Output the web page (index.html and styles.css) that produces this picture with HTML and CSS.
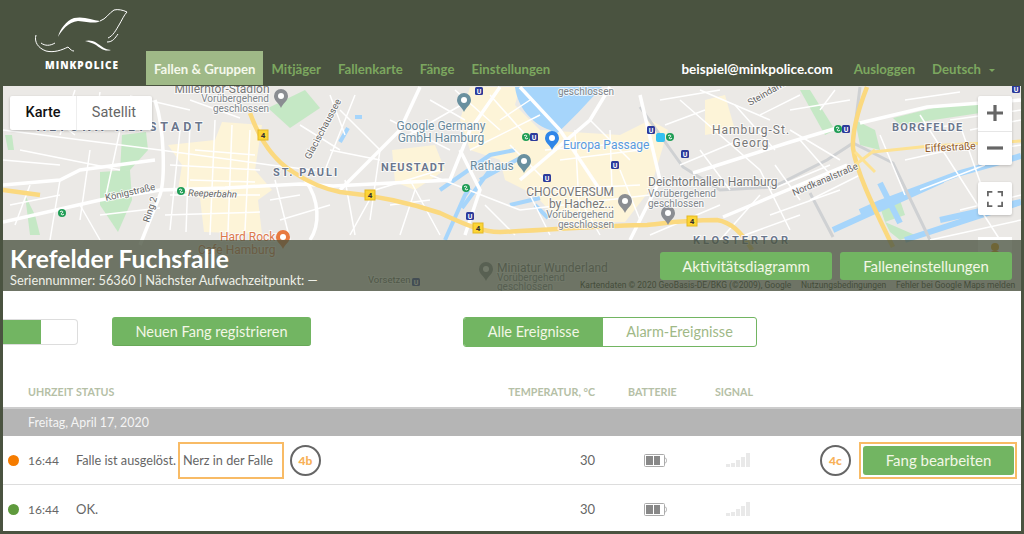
FILE: index.html
```html
<!DOCTYPE html>
<html lang="de">
<head>
<meta charset="utf-8">
<title>MinkPolice</title>
<link rel="stylesheet" href="styles.css">
</head>
<body>
<header class="topbar">
  <a class="logo">
    <svg class="logo-mark" viewBox="30 5 102 50" width="102" height="50">
      <path class="lg-thin" d="M36 35C34 42 38 48 46 51C54 53 62 50 68 47C71 50 72 51 74 51"/>
      <path class="lg-thin" d="M41 43C45 46 50 46 55 43"/>
      <path class="lg-fill" d="M58 37C60 29 66 21 74 18C84 16 92 20 100 21C96 24 88 22 78 21C68 22 62 30 58 37Z"/>
      <path class="lg-thin" d="M100 21C106 19 109 13 114 10C118 9 123 10 127 12C124 15 122 20 119 25C116 30 113 36 108 38"/>
      <path class="lg-thin" d="M118 34C115 38 113 42 107 42"/>
      <path class="lg-fill" d="M85 41C92 39 97 43 101 46C105 49 109 50 111 50C105 52 100 48 96 45C93 43 89 42 85 41Z"/>
    </svg>
    <span class="logo-text">MINKPOLICE</span>
  </a>
  <nav class="nav">
    <a class="nav-item active">Fallen &amp; Gruppen</a>
    <a class="nav-item">Mitjäger</a>
    <a class="nav-item">Fallenkarte</a>
    <a class="nav-item">Fänge</a>
    <a class="nav-item">Einstellungen</a>
  </nav>
  <div class="account">
    <span class="email">beispiel@minkpolice.com</span>
    <a class="nav-item">Ausloggen</a>
    <a class="nav-item lang">Deutsch<i class="caret"></i></a>
  </div>
</header>

<main class="panel">
  <section class="map">
    <svg class="map-art" viewBox="3 86 1018 205" width="1018" height="205">
      <defs>
        <g id="u"><rect x="-4" y="-4" width="8" height="8" rx="1.5" class="ubahn"/><text y="3" class="ub-t">U</text></g>
        <g id="s"><circle r="4" class="sbahn"/><path d="M-2 -1C0 -3 2 -1 0 0C-2 1 0 3 2 1" class="sb-t"/></g>
        <g id="pin"><path d="M0 9C-2 4 -7 2 -7 -3A7 7 0 1 1 7 -3C7 2 2 4 0 9Z"/><circle cy="-3" r="3" class="pin-in"/></g>
        <g id="four"><rect x="-5" y="-5" width="10" height="10" class="shield"/><text y="3" class="sh-t">4</text></g>
      </defs>
      <rect x="3" y="86" width="1018" height="205" class="land"/>
      <path class="yellow-area" d="M168 145L215 140L222 122L262 125L255 170L272 190L258 200L262 234L204 232L200 198L178 190L182 165Z"/>
      <path class="yellow-area" d="M470 87L520 87L515 105L540 130L620 135L650 120L668 130L650 190L625 222L560 222L535 195L505 180L500 160L470 150L460 120Z"/>
      <path class="yellow-area" d="M392 150L435 145L445 170L415 190L395 182Z"/>
      <path class="yellow-area" d="M705 100L725 95L735 130L705 135Z"/>
      <path class="park" d="M122 135L146 132L148 150L130 170L120 172Z"/>
      <path class="park" d="M100 172L130 170L132 200L118 232L100 205Z"/>
      <path class="park" d="M268 108L305 90L320 108L290 128Z"/>
      <path class="park" d="M5 135L12 135L14 150L8 150Z"/>
      <path class="park" d="M25 195L35 215L40 235L30 235Z"/>
      <path class="park" d="M880 207L900 200L905 215L885 222Z"/>
      <path class="park" d="M885 222L915 235L900 240L890 232Z"/>
      <path class="park" d="M893 118L945 105L1000 100L1000 110L900 125Z"/>
      <path class="park" d="M855 120L875 130L880 150L860 145Z"/>
      <path class="park" d="M810 90L835 130L825 135L800 90Z"/>
      <path class="water" d="M515 87L602 87C585 105 570 122 555 135L550 130C535 125 518 110 515 87Z"/>
      <path class="water-s" d="M340 142L348 128M355 117L362 117"/>
      <path class="water-s" d="M440 190L490 155L515 150M462 208L490 170M480 180L520 158M535 205L548 218"/>
      <path class="water-s" d="M445 240L465 195L470 188M510 205L540 198"/>
      <path class="water-l" d="M1021 156L960 173L880 203L860 212M1021 202L940 220M943 180L833 230M880 183L900 223M905 240L1021 202"/>
      <path class="rail" d="M640 107L683 167L720 190L773 187L827 160L853 143L860 87M853 143L893 163L930 240M810 193L833 237"/>
      <g class="road-m">
        <path d="M3 222L100 200L160 190L225 188L300 184L333 186L450 180L470 130L500 87"/>
        <path d="M155 100C165 130 165 180 160 195L140 245"/>
        <path d="M3 185L60 180L80 170L155 160"/>
        <path d="M305 180C320 200 320 225 310 240"/>
        <path d="M340 190L400 130L420 87"/>
        <path d="M460 150L480 190L465 235"/>
        <path d="M520 180L590 120L610 87"/>
        <path d="M520 87L560 130L600 190"/>
        <path d="M640 95L660 180L630 240"/>
        <path d="M693 173L787 143L837 128"/>
        <path d="M860 123L927 107L1021 100"/>
        <path d="M723 217L847 165"/>
      </g>
      <g class="road-s">
        <path d="M3 130L160 150L270 165L330 172M20 150L120 170M60 180L50 240M90 150L80 220M120 130L105 200M180 130L170 230M215 120L210 235M250 130L245 230M170 165L260 170M170 195L260 195M165 215L260 212"/>
        <path d="M3 160L60 165M10 205L60 195M30 100L75 135M75 90L60 135M100 92L95 130M130 96L190 110M190 100L240 118M80 205L100 240M100 215L160 208M15 225L30 185M195 150L255 155M190 180L255 182M232 125L228 232M190 122L186 232M270 200L300 195M280 220L330 205M275 180L290 240M300 125L340 150M330 95L345 135M355 95L325 170"/>
        <path d="M340 110L380 150L370 220M330 150L380 160M350 235L375 190L440 170M400 140L470 100M390 120L450 150M410 180L440 235M430 175L520 210M500 120L530 100M470 150L540 115M560 160L640 150M540 190L640 185M520 210L650 195M590 120L630 160M620 170L640 220"/>
        <path d="M345 180L355 235M390 205L430 200M400 235L415 190M430 100L465 120M455 90L500 130M490 95L530 140M510 145L545 180M545 150L605 145M575 130L580 225M610 130L612 190M530 195L550 235M580 200L600 235M485 205L515 235"/>
        <path d="M680 100L760 170L790 230M700 90L770 120M740 140L680 165M790 110L850 100M790 130L840 160M770 190L830 165M810 200L860 175M770 215L840 190M920 115L1000 240M950 120L1021 110M905 160L950 150M970 130L1021 120M960 210L1021 195M920 190L985 165M930 240L1021 220"/>
        <path d="M660 100L720 90M665 125L705 110M700 150L730 190M735 105L775 150M760 115L800 95M800 140L835 180M775 165L800 200M820 110L835 90M880 135L905 195M900 130L960 125M960 125L990 210M985 150L1021 145M905 100L960 92M745 235L800 215M720 240L760 195M650 235L720 205"/>
      </g>
      <path class="road-y" d="M3 190L40 195"/>
      <path class="road-y" d="M250 113C258 135 270 158 293 172C305 180 320 188 340 192C370 195 407 202 440 213C460 222 480 232 500 232C553 230 607 225 647 225C660 224 680 220 717 220C730 222 742 232 752 250"/>
      <path class="road-y" d="M867 87C858 110 852 130 853 148C856 170 870 200 893 247"/>
      <path class="road-y-t" d="M873 152L930 146L1021 141M855 165L875 150M855 152L875 172"/>
      <use href="#four" x="263" y="135"/>
      <use href="#four" x="370" y="195"/>
      <use href="#four" x="478" y="228"/>
      <use href="#four" x="692" y="221"/>
      <use href="#s" x="62" y="213"/><use href="#s" x="181" y="191"/><use href="#s" x="526" y="137"/><use href="#u" x="534" y="137"/>
      <use href="#s" x="466" y="188"/><use href="#u" x="479" y="91"/><use href="#u" x="470" y="216"/><use href="#u" x="547" y="178"/><use href="#u" x="615" y="165"/>
      <use href="#u" x="651" y="130"/><use href="#s" x="670" y="137"/><use href="#u" x="685" y="154"/>
      <use href="#s" x="838" y="129"/><use href="#u" x="846" y="129"/><use href="#u" x="1016" y="89"/><use href="#u" x="416" y="282"/>
      <rect x="656" y="133" width="9" height="9" rx="2" class="tram"/>
      <use href="#pin" x="464" y="103" class="pin-blue"/>
      <use href="#pin" x="552" y="141" class="pin-eu"/>
      <use href="#pin" x="524" y="164" class="pin-blue"/>
      <use href="#pin" x="625" y="204" class="pin-gray"/>
      <use href="#pin" x="668" y="216" class="pin-gray"/>
      <use href="#pin" x="283" y="240" class="pin-or"/>
      <use href="#pin" x="281" y="99" class="pin-gray"/>
      <use href="#pin" x="486" y="272" class="pin-gray"/>
      <text x="37" y="131" class="ml-dist ls4">ALTONA-ALTSTADT</text>
      <text x="273" y="176" class="ml-dist ls2">ST. PAULI</text>
      <text x="381" y="171" class="ml-dist">NEUSTADT</text>
      <text x="892" y="131" class="ml-dist">BORGFELDE</text>
      <text x="693" y="244" class="ml-dist ls3">KLOSTERTOR</text>
      <text x="222" y="93" class="ml-gray mid">Millerntor-Stadion</text>
      <text x="269" y="102" class="ml-small end">Vorübergehend</text>
      <text x="269" y="112" class="ml-small end">geschlossen</text>
      <text x="441" y="130" class="ml-blue mid">Google Germany</text>
      <text x="441" y="142" class="ml-blue mid">GmbH Hamburg</text>
      <text x="470" y="170" class="ml-blue">Rathaus</text>
      <text x="563" y="149" class="ml-eu">Europa Passage</text>
      <text x="614" y="196" class="ml-gray end">CHOCOVERSUM</text>
      <text x="614" y="208" class="ml-gray end">by Hachez...</text>
      <text x="614" y="218" class="ml-small end">Vorübergehend</text>
      <text x="614" y="228" class="ml-small end">geschlossen</text>
      <text x="648" y="186" class="ml-gray">Deichtorhallen Hamburg</text>
      <text x="648" y="197" class="ml-small">Vorübergehend</text>
      <text x="648" y="207" class="ml-small">geschlossen</text>
      <text x="614" y="95" class="ml-small end">geschlossen</text>
      <text x="751" y="134" class="ml-gray mid ls1">Hamburg-St.</text>
      <text x="751" y="147" class="ml-gray mid ls1">Georg</text>
      <text x="925" y="152" class="ml-road" transform="rotate(-3 925 152)">Eiffestraße</text>
      <text x="794" y="196" class="ml-st" transform="rotate(-23 794 196)">Nordkanalstraße</text>
      <text x="750" y="106" class="ml-st" transform="rotate(-30 750 106)">Steindamm</text>
      <text x="310" y="160" class="ml-st" transform="rotate(-62 310 160)">Glacischaussee</text>
      <text x="106" y="201" class="ml-st" transform="rotate(-13 106 201)">Königstraße</text>
      <text x="188" y="196" class="ml-st ital" transform="rotate(2 188 196)">Reeperbahn</text>
      <text x="149" y="223" class="ml-st" transform="rotate(-72 149 223)">Ring 2</text>
      <text x="220" y="241" class="ml-or">Hard Rock</text>
      <text x="198" y="254" class="ml-or">Cafe Hamburg</text>
      <text x="497" y="272" class="ml-gray">Miniatur Wunderland</text>
      <text x="497" y="281" class="ml-small">Vorübergehend</text>
      <text x="497" y="290" class="ml-small">geschlossen</text>
      <text x="368" y="283" class="ml-st">Vorsetzen</text>
      <text x="580" y="288" class="ml-att">Kartendaten © 2020 GeoBasis-DE/BKG (©2009), Google</text>
      <text x="801" y="288" class="ml-att">Nutzungsbedingungen</text>
      <text x="896" y="288" class="ml-att">Fehler bei Google Maps melden</text>
    </svg>

    <div class="map-type">
      <span class="map-type-on">Karte</span>
      <span class="map-type-off">Satellit</span>
    </div>
    <div class="map-zoom">
      <span class="zoom-btn"><svg width="18" height="18" viewBox="0 0 18 18"><path d="M1 9H17M9 1V17"/></svg></span>
      <span class="zoom-btn"><svg width="18" height="18" viewBox="0 0 18 18"><path d="M1 9H17"/></svg></span>
    </div>
    <div class="map-full">
      <svg width="18" height="18" viewBox="0 0 18 18"><path d="M1 6V1H6M12 1H17V6M17 12V17H12M6 17H1V12"/></svg>
    </div>
    <div class="map-peg"><svg width="12" height="18" viewBox="0 0 12 18"><circle cx="6" cy="5" r="4"/><rect x="2" y="9" width="8" height="8" rx="2"/></svg></div>

    <div class="trap-bar">
      <div class="trap-info">
        <h1 class="trap-title">Krefelder Fuchsfalle</h1>
        <p class="trap-meta">Seriennummer: 56360 | Nächster Aufwachzeitpunkt: —</p>
      </div>
      <div class="trap-actions">
        <a class="btn btn-bar">Aktivitätsdiagramm</a>
        <a class="btn btn-bar">Falleneinstellungen</a>
      </div>
    </div>
  </section>

  <section class="toolbar">
    <div class="toggle"><span class="toggle-on"></span></div>
    <a class="btn btn-new">Neuen Fang registrieren</a>
    <div class="segment">
      <a class="seg seg-on">Alle Ereignisse</a>
      <a class="seg seg-off">Alarm-Ereignisse</a>
    </div>
  </section>

  <section class="table">
    <div class="row head">
      <span></span>
      <span>Uhrzeit</span>
      <span>Status</span>
      <span class="num">Temperatur, °C</span>
      <span class="c-bat">Batterie</span>
      <span class="c-sig">Signal</span>
      <span></span>
    </div>
    <div class="date-row">Freitag, April 17, 2020</div>
    <div class="row event">
      <span class="dot dot-alarm"></span>
      <span class="time">16:44</span>
      <span class="status"><span class="status-text">Falle ist ausgelöst.</span><span class="mark">Nerz in der Falle</span><span class="badge">4b</span></span>
      <span class="num">30</span>
      <span class="c-bat"><svg class="battery" width="24" height="13" viewBox="0 0 24 13"><rect x=".5" y=".5" width="20" height="12" rx="1" class="bat-o"/><rect x="2" y="2" width="7" height="9" class="bat-c"/><rect x="10" y="2" width="6" height="9" class="bat-c"/><path d="M21 4C23 4 23 9 21 9" class="bat-t"/></svg></span>
      <span class="c-sig"><svg class="signal" width="24" height="14" viewBox="0 0 24 14"><rect x="0" y="11" width="4" height="3"/><rect x="5" y="10" width="4" height="4"/><rect x="10" y="7" width="4" height="7"/><rect x="15" y="4" width="4" height="10"/><rect x="20" y="0" width="4" height="14"/></svg></span>
      <span class="act"><span class="badge">4c</span><span class="mark-btn"><a class="btn btn-edit">Fang bearbeiten</a></span></span>
    </div>
    <div class="row event last">
      <span class="dot dot-ok"></span>
      <span class="time">16:44</span>
      <span class="status">OK.</span>
      <span class="num">30</span>
      <span class="c-bat"><svg class="battery" width="24" height="13" viewBox="0 0 24 13"><rect x=".5" y=".5" width="20" height="12" rx="1" class="bat-o"/><rect x="2" y="2" width="7" height="9" class="bat-c"/><rect x="10" y="2" width="6" height="9" class="bat-c"/><path d="M21 4C23 4 23 9 21 9" class="bat-t"/></svg></span>
      <span class="c-sig"><svg class="signal" width="24" height="14" viewBox="0 0 24 14"><rect x="0" y="11" width="4" height="3"/><rect x="5" y="10" width="4" height="4"/><rect x="10" y="7" width="4" height="7"/><rect x="15" y="4" width="4" height="10"/><rect x="20" y="0" width="4" height="14"/></svg></span>
      <span class="act"></span>
    </div>
  </section>
</main>
</body>
</html>
```
FILE: styles.css
```css
* { box-sizing: border-box; }
html, body { margin: 0; padding: 0; }
body {
  background: #4a5340;
  font-family: Lato, "Noto Sans", sans-serif;
  font-size: 13px;
  color: #666;
  width: 1024px;
  height: 534px;
  overflow: hidden;
}
a { text-decoration: none; }

/* header */
.topbar { height: 85px; display: flex; align-items: flex-end; }
.logo { width: 146px; height: 85px; display: flex; flex-direction: column; align-items: flex-start; padding: 5px 0 0 30px; }
.logo-mark { display: block; flex: none; }
.logo-text { color: #fff; font: 800 10px "Open Sans", sans-serif; letter-spacing: 1px; margin: 3px 0 0 15px; }
.lg-thin { fill: none; stroke: #fff; stroke-width: 1; }
.lg-fill { fill: #fff; stroke: none; }
.nav { display: flex; height: 34px; }
.nav-item { color: #7ca75f; font-weight: 700; font-size: 13.2px; line-height: 36px; padding: 0 8.5px; white-space: nowrap; }
.nav-item.active { background: #9fb987; color: #f4f8ea; width: 117px; padding: 0 0 0 8px; }
.account { margin-left: auto; display: flex; height: 34px; padding-right: 29px; }
.email { color: #fff; font-weight: 700; font-size: 13.5px; line-height: 36px; margin-right: 12.5px; }
.lang { padding-right: 0; }
.caret { display: inline-block; margin-left: 8px; border: 3px solid transparent; border-top: 3px solid #7ca75f; border-bottom: 0; vertical-align: 2px; }

/* panel */
.panel { margin: 1px 3px 0; background: #fff; height: 445px; }

/* map */
.map { position: relative; height: 205px; overflow: hidden; }
.map-art { display: block; font-family: Roboto, sans-serif; }
.land { fill: #ebe9e6; }
.yellow-area { fill: #fdf4d8; }
.park { fill: #c5e8c5; }
.water { fill: #a6d5fb; }
.water-s { fill: none; stroke: #a6d5fb; stroke-width: 4; }
.water-l { fill: none; stroke: #a6d5fb; stroke-width: 6; }
.rail { fill: none; stroke: #cfd1d3; stroke-width: 3; }
.road-m path { fill: none; stroke: #fff; stroke-width: 3.5; }
.road-s path { fill: none; stroke: #fff; stroke-width: 1.5; }
.road-y { fill: none; stroke: #fbd97f; stroke-width: 4.5; }
.road-y-t { fill: none; stroke: #fde293; stroke-width: 3; }
.shield { fill: #fcd535; stroke: #e4b825; }
.sh-t { font-size: 8px; font-weight: 700; text-anchor: middle; fill: #333; }
.ubahn { fill: #2c3a9a; }
.ub-t { font-size: 7px; font-weight: 700; fill: #fff; text-anchor: middle; }
.sbahn { fill: #1f9d55; }
.sb-t { fill: none; stroke: #fff; stroke-width: 1; }
.tram { fill: #35c0f0; }
.pin-in { fill: #fff; }
.pin-blue { fill: #69909f; }
.pin-gray { fill: #8a8d92; }
.pin-eu { fill: #2f86e8; }
.pin-or { fill: #e8793e; }
.ml-dist { font-size: 11px; font-weight: 700; fill: #6b778d; letter-spacing: 1.2px; paint-order: stroke; stroke: #fff; stroke-width: 1.5px; }
.ls1 { letter-spacing: 1px; }
.ls2 { letter-spacing: 2px; }
.ls3 { letter-spacing: 3px; }
.ls4 { letter-spacing: 3.8px; font-size: 12.5px; }
.ml-gray, .ml-small, .ml-blue, .ml-eu, .ml-road, .ml-st, .ml-or { paint-order: stroke; stroke: rgba(255,255,255,.75); stroke-width: 2px; }
.ml-gray { font-size: 12px; fill: #777; }
.ml-small { font-size: 10px; fill: #80868b; }
.ml-blue { font-size: 12px; fill: #6a8a9c; }
.ml-eu { font-size: 12px; fill: #5a9ade; }
.ml-road { font-size: 10.5px; fill: #8f5a2a; }
.ml-st { font-size: 9.5px; fill: #666; }
.ital { font-style: italic; }
.ml-or { font-size: 12px; fill: #dd7a4c; }
.ml-att { font-size: 8.5px; fill: #2e3328; }
.mid { text-anchor: middle; }
.end { text-anchor: end; }

.map-type { position: absolute; left: 7px; top: 10px; width: 142px; height: 34px; display: flex; background: #fff; border-radius: 2px; box-shadow: 0 1px 3px rgba(0,0,0,.2); font: 14.5px/34px Roboto, sans-serif; }
.map-type-on { width: 66px; text-align: center; color: #111; font-weight: 500; box-shadow: 1px 0 0 #eee; }
.map-type-off { flex: 1; text-align: center; color: #666; }
.map-zoom { position: absolute; left: 975px; top: 10px; width: 34px; height: 69px; background: #fff; border-radius: 2px; box-shadow: 0 1px 3px rgba(0,0,0,.2); display: flex; flex-direction: column; }
.zoom-btn { flex: 1; display: flex; align-items: center; justify-content: center; }
.zoom-btn:first-child { box-shadow: 0 1px 0 #e6e6e6; }
.zoom-btn path { fill: none; stroke: #666; stroke-width: 3.2; }
.map-full { position: absolute; left: 975px; top: 96px; width: 34px; height: 33px; background: #fff; border-radius: 2px; display: flex; align-items: center; justify-content: center; box-shadow: 0 1px 3px rgba(0,0,0,.2); }
.map-full svg { width: 16px; height: 16px; }
.map-full path { fill: none; stroke: #666; stroke-width: 2; }
.map-peg { position: absolute; left: 975px; top: 151px; width: 34px; height: 34px; background: #fff; display: flex; justify-content: center; padding-top: 5px; }
.map-peg svg { fill: #f2a819; }

.trap-bar { position: absolute; left: 0; right: 0; bottom: 0; height: 51px; background: rgba(74, 83, 64, .78); display: flex; justify-content: space-between; padding: 0 9px 0 7px; }
.trap-title { margin: 5px 0 0; color: #fff; font-size: 24.7px; line-height: 27px; font-weight: 700; }
.trap-meta { margin: 0; color: #eef0e8; font-size: 12.8px; line-height: 17px; }
.trap-actions { display: flex; gap: 8px; padding-top: 12px; }
.btn { display: flex; align-items: center; justify-content: center; background: #72b562; color: #f2f7e6; border-radius: 3px; font-size: 15px; white-space: nowrap; }
.btn-bar { width: 172px; height: 28px; }

/* toolbar */
.toolbar { display: flex; align-items: center; height: 95px; padding-bottom: 14px; }
.toggle { width: 75px; height: 26px; border: 1px solid #ddd; border-left: 0; border-radius: 0 4px 4px 0; overflow: hidden; }
.toggle-on { display: block; width: 38px; height: 100%; background: #72b562; }
.btn-new { width: 199px; height: 29px; margin-left: 34px; font-size: 14.5px; border-bottom: 1px solid #68a858; }
.segment { display: flex; margin-left: 152px; height: 30px; width: 294px; border: 1px solid #72b562; border-radius: 3px; overflow: hidden; }
.seg { display: flex; align-items: center; justify-content: center; font-size: 14.5px; }
.seg-on { width: 139px; background: #72b562; color: #f2f7e6; }
.seg-off { flex: 1; color: #9fb987; }

/* table */
.row { display: grid; grid-template-columns: 25px 48px 432px 87px 120px 64px 1fr; align-items: center; }
.head { height: 11px; font-size: 10.7px; line-height: 11px; font-weight: 700; text-transform: uppercase; color: #b5c0a6; white-space: nowrap; }
.num { text-align: right; }
.head .num { direction: rtl; }
.head .c-bat { padding-left: 33px; }
.event .c-bat { padding-left: 49px; display: flex; }
.event .c-sig { padding-left: 11px; display: flex; }
.date-row { margin-top: 10px; height: 29px; background: #b5b5b5; border-top: 2px solid #ccc; color: #f4f4f4; font-size: 12.4px; line-height: 27px; padding-left: 25px; }
.event { height: 49px; border-bottom: 1px solid #ddd; font-size: 13px; color: #666; }
.event.last { height: 46px; border-bottom: 0; padding-top: 2px; }
.time { font-size: 12px; }
.dot { width: 11px; height: 11px; border-radius: 50%; margin-left: 5px; }
.dot-alarm { background: #f57c00; }
.dot-ok { background: #5f9a3d; }
.status { display: flex; align-items: center; }
.status-text { width: 102px; white-space: nowrap; font-size: 12.7px; }
.mark { display: block; width: 106px; height: 37px; border: 2px solid #f8bb66; line-height: 33px; padding-left: 3px; font-size: 12.7px; white-space: nowrap; }
.badge { width: 31px; height: 31px; border: 2px solid #666; border-radius: 50%; color: #f8b158; font-size: 12px; font-weight: 900; text-align: center; line-height: 27px; flex: none; }
.status .badge { margin-left: 6px; }
.bat-o { fill: none; stroke: #aaa; }
.bat-c { fill: #888; }
.bat-t { fill: none; stroke: #aaa; }
.signal { fill: #e9e9e9; }
.act { display: flex; align-items: center; justify-content: flex-end; gap: 8px; padding-right: 4px; }
.mark-btn { display: block; width: 158px; height: 37px; border: 2px solid #f8bb66; padding: 2px 1px 2px 2px; }
.btn-edit { height: 100%; }
```
